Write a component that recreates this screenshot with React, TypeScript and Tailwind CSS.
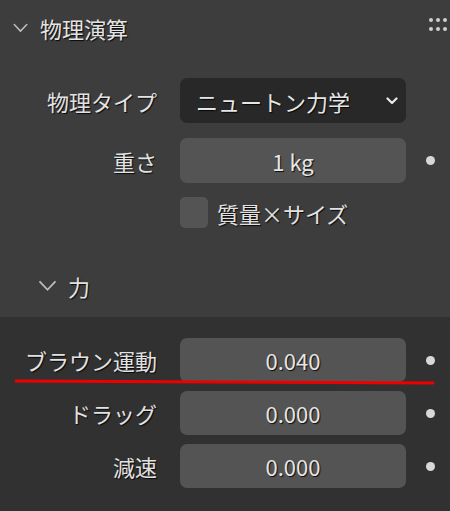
import React from "react";

const font = "font-['Noto_Sans_CJK_JP','Noto_Sans',sans-serif]";
const shadow = "[text-shadow:1px_1px_1px_rgba(0,0,0,0.85)]";

const Chevron = ({ className }: { className: string }) => (
  <svg viewBox="0 0 12 8" className={className} fill="none" aria-hidden="true">
    <path d="M1 1.2 L6 6.5 L11 1.2" stroke="currentColor" strokeWidth="1.2" strokeLinecap="round" strokeLinejoin="round" />
  </svg>
);

const Dot = () => <div className="ml-[20px] h-[9px] w-[9px] rounded-full bg-[#d8d8d8]" />;

const NumberRow = ({ label, value }: { label: string; value: string }) => (
  <div className="flex h-[44px] items-center">
    <div className={`w-[157px] text-right text-[22px] text-[#e2e2e2] ${shadow}`}>{label}</div>
    <div
      className={`ml-[23px] flex h-full w-[226px] items-center justify-center rounded-[7px] bg-[#545454] text-[22px] text-[#e6e6e6] ${shadow}`}
    >
      {value}
    </div>
    <Dot />
  </div>
);

export default function App() {
  return (
    <div className={`relative h-[511px] w-[450px] overflow-hidden leading-none ${font}`}>
      <div className="flex h-[317px] flex-col bg-[#3d3d3d]">
        {/* panel header */}
        <div className="flex h-[56px] items-center">
          <Chevron className="ml-[13px] h-[10px] w-[15px] text-[#bdbdbd]" />
          <span className={`ml-[12px] text-[22px] text-[#e4e4e4] ${shadow}`}>物理演算</span>
          <div className="mb-[8px] ml-auto mr-[-4px] grid grid-cols-4 gap-x-[3px] gap-y-[5px]">
            {Array.from({ length: 8 }).map((_, i) => (
              <div key={i} className="h-[4px] w-[4px] rounded-full bg-[#cfcfcf]" />
            ))}
          </div>
        </div>

        <div className="mt-[22px] flex h-[45px] items-center">
          <div className={`w-[157px] text-right text-[22px] text-[#e2e2e2] ${shadow}`}>物理タイプ</div>
          <div
            className={`ml-[23px] flex h-full w-[226px] items-center rounded-[7px] bg-[#282828] pl-[16px] pr-[8px] text-[22px] text-[#e6e6e6] ${shadow}`}
          >
            <span>ニュートン力学</span>
            <svg viewBox="0 0 12 8" className="ml-auto h-[8px] w-[12px]" fill="none" aria-hidden="true">
              <path d="M1.5 1.5 L6 6 L10.5 1.5" stroke="#e8e8e8" strokeWidth="2.2" strokeLinecap="round" strokeLinejoin="round" />
            </svg>
          </div>
        </div>

        <div className="mt-[15px] flex h-[45px] items-center">
          <div className={`w-[157px] text-right text-[22px] text-[#e2e2e2] ${shadow}`}>重さ</div>
          <div
            className={`ml-[23px] flex h-full w-[226px] items-center justify-center rounded-[7px] bg-[#545454] text-[22px] text-[#e6e6e6] ${shadow}`}
          >
            1 kg
          </div>
          <Dot />
        </div>

        <div className="mt-[14px] flex h-[31px] items-center pl-[180px]">
          <div className="h-[31px] w-[28px] rounded-[5px] bg-[#545454]" />
          <span className={`ml-[9px] text-[22px] text-[#e2e2e2] ${shadow}`}>質量×サイズ</span>
        </div>

        <div className="mt-[38px] flex h-[40px] items-center">
          <Chevron className="ml-[38px] h-[12px] w-[19px] text-[#bdbdbd]" />
          <span className={`ml-[11px] text-[22px] text-[#e2e2e2] ${shadow}`}>力</span>
        </div>
      </div>

      <div className="flex h-[194px] flex-col gap-[9px] bg-[#313131] pt-[21px]">
        <NumberRow label="ブラウン運動" value="0.040" />
        <NumberRow label="ドラッグ" value="0.000" />
        <NumberRow label="減速" value="0.000" />
      </div>

      {/* red annotation underline */}
      <svg className="absolute left-0 top-0 h-[511px] w-[450px]" viewBox="0 0 450 511" aria-hidden="true">
        <line x1="16" y1="381" x2="433" y2="383" stroke="#ee0000" strokeWidth="3" strokeLinecap="round" />
      </svg>
    </div>
  );
}
